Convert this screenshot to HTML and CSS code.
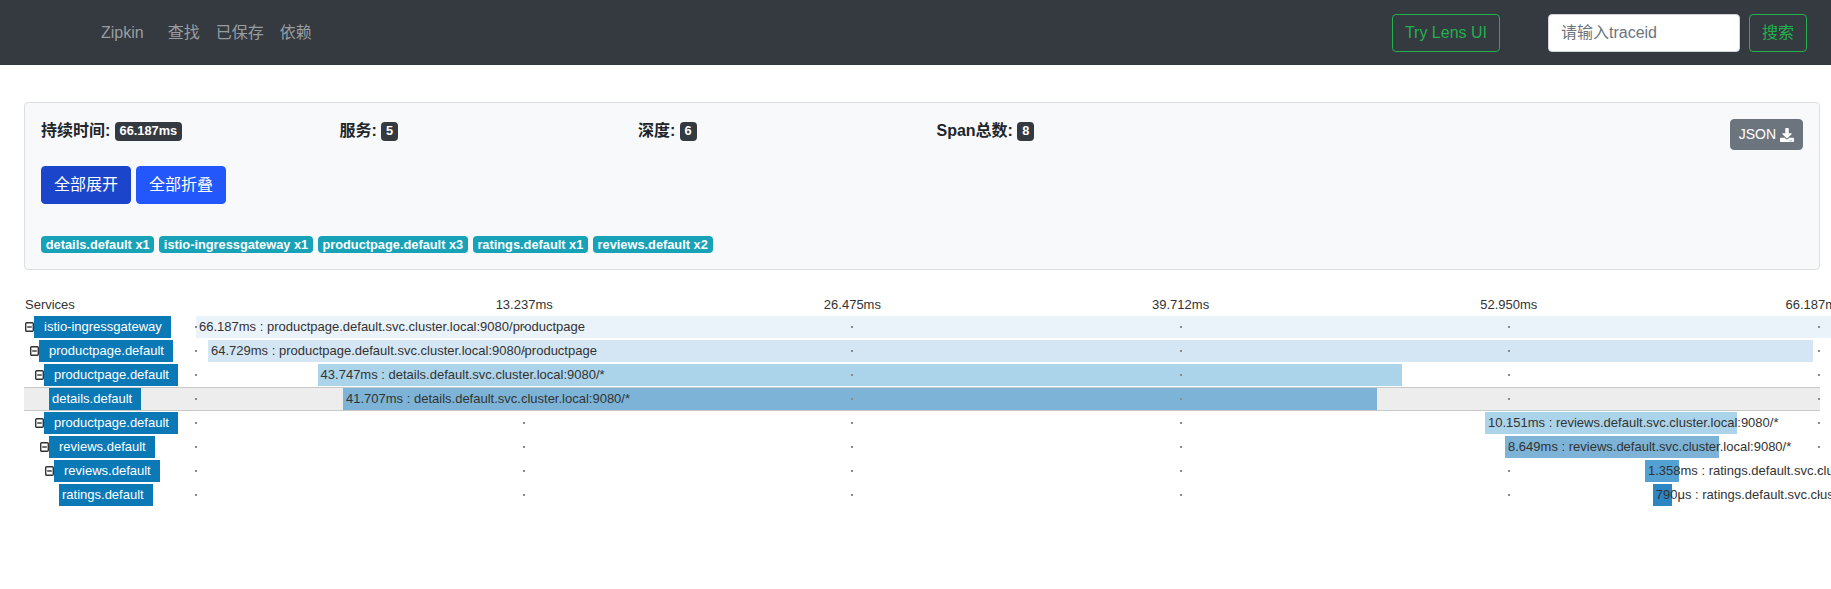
FILE: index.html
```html
<!DOCTYPE html>
<html lang="zh">
<head>
<meta charset="utf-8">
<title>Zipkin</title>
<link rel="stylesheet" href="styles.css">
</head>
<body>
<nav class="navbar">
  <a class="brand" href="#">Zipkin</a>
  <ul class="nav-links">
    <li class="nav-link">查找</li>
    <li class="nav-link">已保存</li>
    <li class="nav-link">依赖</li>
  </ul>
  <div class="nav-right">
    <button class="btn btn-outline-success lens">Try Lens UI</button>
    <form class="search">
      <input class="search-input" type="text" placeholder="请输入traceid">
      <button class="btn btn-outline-success search-btn" type="button">搜索</button>
    </form>
  </div>
</nav>

<main class="page">
  <section class="card">
    <div class="summary">
      <div class="stat">持续时间: <span class="badge badge-dark">66.187ms</span></div>
      <div class="stat">服务: <span class="badge badge-dark">5</span></div>
      <div class="stat">深度: <span class="badge badge-dark">6</span></div>
      <div class="stat">Span总数: <span class="badge badge-dark">8</span></div>
      <div class="json-col">
        <button class="btn-json">JSON
          <svg class="dl-icon" viewBox="0 0 512 512" width="14" height="14"><path fill="#fff" d="M216 0h80c13.3 0 24 10.7 24 24v168h87.7c17.8 0 26.7 21.5 14.1 34.1L269.7 378.3c-7.5 7.5-19.8 7.5-27.3 0L90.1 226.1c-12.6-12.6-3.7-34.1 14.1-34.1H192V24c0-13.3 10.7-24 24-24zm296 376v112c0 13.3-10.7 24-24 24H24c-13.3 0-24-10.7-24-24V376c0-13.3 10.7-24 24-24h146.7l49 49c20.1 20.1 52.5 20.1 72.600 0l49-49H488c13.3 0 24 10.7 24 24zm-124 88c0-11-9-20-20-20s-20 9-20 20 9 20 20 20 20-9 20-20zm64 0c0-11-9-20-20-20s-20 9-20 20 9 20 20 20 20-9 20-20z"/></svg>
        </button>
      </div>
    </div>
    <div class="actions">
      <button class="btn btn-primary active">全部展开</button>
      <button class="btn btn-primary">全部折叠</button>
    </div>
    <div class="tags">
      <span class="tag">details.default x1</span>
      <span class="tag">istio-ingressgateway x1</span>
      <span class="tag">productpage.default x3</span>
      <span class="tag">ratings.default x1</span>
      <span class="tag">reviews.default x2</span>
    </div>
  </section>

  <section class="trace">
    <div class="trace-header">
      <div class="services-title">Services</div>
      <div class="axis">
        <span class="axis-label t1">13.237ms</span>
        <span class="axis-label t2">26.475ms</span>
        <span class="axis-label t3">39.712ms</span>
        <span class="axis-label t4">52.950ms</span>
        <span class="axis-label t5">66.187ms</span>
      </div>
    </div>

    <div class="trace-row">
      <div class="svc" style="margin-left:0px">
        <span class="toggle"><svg width="9" height="10" viewBox="0 0 9 10"><rect x="0.7" y="0.7" width="7.6" height="8.6" rx="1" fill="none" stroke="#333" stroke-width="1.4"/><line x1="2.2" y1="5" x2="6.8" y2="5" stroke="#333" stroke-width="1.4"/></svg></span>
        <span class="svc-name">istio-ingressgateway</span>
      </div>
      <div class="timeline">
        <div class="bar d1" style="left:0%;width:100%"></div>
        <span class="tick-dot t0"></span><span class="tick-dot t1"></span><span class="tick-dot t2"></span><span class="tick-dot t3"></span><span class="tick-dot t4"></span><span class="tick-dot t5"></span>
        <span class="bar-text" style="left:0%">66.187ms : productpage.default.svc.cluster.local:9080/productpage</span>
      </div>
    </div>

    <div class="trace-row">
      <div class="svc" style="margin-left:5px">
        <span class="toggle"><svg width="9" height="10" viewBox="0 0 9 10"><rect x="0.7" y="0.7" width="7.6" height="8.6" rx="1" fill="none" stroke="#333" stroke-width="1.4"/><line x1="2.2" y1="5" x2="6.8" y2="5" stroke="#333" stroke-width="1.4"/></svg></span>
        <span class="svc-name">productpage.default</span>
      </div>
      <div class="timeline">
        <div class="bar d2" style="left:0.73%;width:97.78%"></div>
        <span class="tick-dot t0"></span><span class="tick-dot t1"></span><span class="tick-dot t2"></span><span class="tick-dot t3"></span><span class="tick-dot t4"></span><span class="tick-dot t5"></span>
        <span class="bar-text" style="left:0.73%">64.729ms : productpage.default.svc.cluster.local:9080/productpage</span>
      </div>
    </div>

    <div class="trace-row">
      <div class="svc" style="margin-left:10px">
        <span class="toggle"><svg width="9" height="10" viewBox="0 0 9 10"><rect x="0.7" y="0.7" width="7.6" height="8.6" rx="1" fill="none" stroke="#333" stroke-width="1.4"/><line x1="2.2" y1="5" x2="6.8" y2="5" stroke="#333" stroke-width="1.4"/></svg></span>
        <span class="svc-name">productpage.default</span>
      </div>
      <div class="timeline">
        <div class="bar d3" style="left:7.41%;width:66.09%"></div>
        <span class="tick-dot t0"></span><span class="tick-dot t1"></span><span class="tick-dot t2"></span><span class="tick-dot t3"></span><span class="tick-dot t4"></span><span class="tick-dot t5"></span>
        <span class="bar-text" style="left:7.41%">43.747ms : details.default.svc.cluster.local:9080/*</span>
      </div>
    </div>

    <div class="trace-row selected">
      <div class="svc" style="margin-left:15px">
        <span class="toggle"></span>
        <span class="svc-name leaf">details.default</span>
      </div>
      <div class="timeline">
        <div class="bar d4" style="left:8.96%;width:63.01%"></div>
        <span class="tick-dot t0"></span><span class="tick-dot t1"></span><span class="tick-dot t2"></span><span class="tick-dot t3"></span><span class="tick-dot t4"></span><span class="tick-dot t5"></span>
        <span class="bar-text" style="left:8.96%">41.707ms : details.default.svc.cluster.local:9080/*</span>
      </div>
    </div>

    <div class="trace-row">
      <div class="svc" style="margin-left:10px">
        <span class="toggle"><svg width="9" height="10" viewBox="0 0 9 10"><rect x="0.7" y="0.7" width="7.6" height="8.6" rx="1" fill="none" stroke="#333" stroke-width="1.4"/><line x1="2.2" y1="5" x2="6.8" y2="5" stroke="#333" stroke-width="1.4"/></svg></span>
        <span class="svc-name">productpage.default</span>
      </div>
      <div class="timeline">
        <div class="bar d3" style="left:78.55%;width:15.33%"></div>
        <span class="tick-dot t0"></span><span class="tick-dot t1"></span><span class="tick-dot t2"></span><span class="tick-dot t3"></span><span class="tick-dot t4"></span><span class="tick-dot t5"></span>
        <span class="bar-text" style="left:78.55%">10.151ms : reviews.default.svc.cluster.local:9080/*</span>
      </div>
    </div>

    <div class="trace-row">
      <div class="svc" style="margin-left:15px">
        <span class="toggle"><svg width="9" height="10" viewBox="0 0 9 10"><rect x="0.7" y="0.7" width="7.6" height="8.6" rx="1" fill="none" stroke="#333" stroke-width="1.4"/><line x1="2.2" y1="5" x2="6.8" y2="5" stroke="#333" stroke-width="1.4"/></svg></span>
        <span class="svc-name">reviews.default</span>
      </div>
      <div class="timeline">
        <div class="bar d4" style="left:79.77%;width:13.07%"></div>
        <span class="tick-dot t0"></span><span class="tick-dot t1"></span><span class="tick-dot t2"></span><span class="tick-dot t3"></span><span class="tick-dot t4"></span><span class="tick-dot t5"></span>
        <span class="bar-text" style="left:79.77%">8.649ms : reviews.default.svc.cluster.local:9080/*</span>
      </div>
    </div>

    <div class="trace-row">
      <div class="svc" style="margin-left:20px">
        <span class="toggle"><svg width="9" height="10" viewBox="0 0 9 10"><rect x="0.7" y="0.7" width="7.6" height="8.6" rx="1" fill="none" stroke="#333" stroke-width="1.4"/><line x1="2.2" y1="5" x2="6.8" y2="5" stroke="#333" stroke-width="1.4"/></svg></span>
        <span class="svc-name">reviews.default</span>
      </div>
      <div class="timeline">
        <div class="bar d5" style="left:88.30%;width:2.05%"></div>
        <span class="tick-dot t0"></span><span class="tick-dot t1"></span><span class="tick-dot t2"></span><span class="tick-dot t3"></span><span class="tick-dot t4"></span><span class="tick-dot t5"></span>
        <span class="bar-text" style="left:88.30%">1.358ms : ratings.default.svc.cluster.local:9080/*</span>
      </div>
    </div>

    <div class="trace-row">
      <div class="svc" style="margin-left:25px">
        <span class="toggle"></span>
        <span class="svc-name leaf">ratings.default</span>
      </div>
      <div class="timeline">
        <div class="bar d6" style="left:88.77%;width:1.19%"></div>
        <span class="tick-dot t0"></span><span class="tick-dot t1"></span><span class="tick-dot t2"></span><span class="tick-dot t3"></span><span class="tick-dot t4"></span><span class="tick-dot t5"></span>
        <span class="bar-text" style="left:88.77%">790μs : ratings.default.svc.cluster.local:9080/*</span>
      </div>
    </div>
  </section>
</main>
</body>
</html>
```

FILE: styles.css
```css
* { box-sizing: border-box; }

html, body {
  margin: 0;
  padding: 0;
  background: #fff;
  overflow: hidden;
}

body {
  font-family: "Liberation Sans", "Noto Sans CJK SC", sans-serif;
  color: #212529;
  font-size: 16px;
}

/* ---------- navbar ---------- */
.navbar {
  height: 65px;
  background: #343a40;
  display: flex;
  align-items: center;
  padding: 0 24px 0 101px;
}

.brand {
  font-size: 16px;
  line-height: 24px;
  color: #9a9da0;
  text-decoration: none;
  margin-right: 16px;
}

.nav-links {
  display: flex;
  list-style: none;
  margin: 0;
  padding: 0;
}

.nav-link {
  padding: 0 8px;
  font-size: 16px;
  line-height: 24px;
  color: #9a9da0;
}

.nav-right {
  margin-left: auto;
  display: flex;
  align-items: center;
}

.search {
  display: flex;
  align-items: center;
  margin: 0;
}

.btn {
  font-family: inherit;
  font-size: 16px;
  line-height: 24px;
  padding: 6px 12px;
  border: 1px solid transparent;
  border-radius: 4px;
  background: none;
  cursor: pointer;
}

.btn-outline-success {
  color: #22b14c;
  border-color: #22b14c;
}

.lens {
  margin-right: 48px;
}

.search-input {
  width: 192px;
  height: 38px;
  padding: 6px 12px;
  border: 1px solid #ced4da;
  border-radius: 4px;
  font-family: inherit;
  font-size: 16px;
  color: #495057;
  background: #fff;
}

.search-input::placeholder {
  color: #6c757d;
}

.search-btn {
  margin-left: 9px;
}

/* ---------- page ---------- */
.page {
  padding: 37px 11px 0 24px;
}

.card {
  background: #f8f9fa;
  border: 1px solid #dcdfe3;
  border-radius: 4px;
  padding: 16px;
}

.summary {
  display: grid;
  grid-template-columns: repeat(4, 298.5px) 1fr;
  align-items: start;
}

.stat {
  font-size: 16px;
  font-weight: 700;
  line-height: 24px;
  color: #212529;
}

.badge {
  display: inline-block;
  font-size: 12.8px;
  font-weight: 700;
  line-height: 1;
  padding: 3px 4.8px;
  border-radius: 4px;
  vertical-align: 1px;
}

.badge-dark {
  background: #343a40;
  color: #fff;
}

.json-col {
  justify-self: end;
}

.btn-json {
  display: inline-flex;
  align-items: center;
  gap: 4px;
  font-family: inherit;
  font-size: 14px;
  line-height: 21px;
  padding: 4px 8px;
  border: 1px solid #6c757d;
  border-radius: 4px;
  background: #6c757d;
  color: #fff;
}

.dl-icon {
  display: block;
}

.actions {
  margin-top: 16px;
  display: flex;
  gap: 5px;
}

.btn-primary {
  color: #fff;
  background: #2457fb;
  border-color: #2457fb;
}

.btn-primary.active {
  background: #1b46cc;
  border-color: #1b46cc;
}

.tags {
  margin-top: 32px;
  display: flex;
  gap: 4.6px;
}

.tag {
  display: inline-block;
  background: #17a2b8;
  color: #fff;
  font-size: 12.8px;
  font-weight: 700;
  line-height: 17px;
  padding: 0 4.8px;
  border-radius: 4px;
}

/* ---------- trace ---------- */
.trace {
  margin-top: 25px;
  font-size: 13px;
  color: #333;
}

.trace-header {
  display: grid;
  grid-template-columns: 172px 1641px;
  height: 20px;
  line-height: 20px;
}

.services-title {
  padding-left: 1px;
}

.axis {
  position: relative;
}

.axis-label {
  position: absolute;
  top: 0;
  transform: translateX(-50%);
  white-space: nowrap;
}

.axis-label.t1 { left: 20%; }
.axis-label.t2 { left: 40%; }
.axis-label.t3 { left: 60%; }
.axis-label.t4 { left: 80%; }
.axis-label.t5 { left: 1618px; }

.trace-row {
  display: grid;
  grid-template-columns: 172px 1641px;
  height: 24px;
  padding: 1px 0;
}

.trace-row.selected {
  background: #ededed;
  border-top: 1px solid #c9c9c9;
  border-bottom: 1px solid #c9c9c9;
  padding: 0;
}

.svc {
  display: flex;
  align-items: center;
  height: 22px;
}

.toggle {
  flex: none;
  width: 10px;
  height: 22px;
  display: flex;
  align-items: center;
  padding-left: 1px;
}

.toggle svg {
  display: block;
}

.svc-name {
  background: #0b79b5;
  color: #fff;
  font-size: 13px;
  line-height: 22px;
  height: 22px;
  padding: 0 9px 0 10px;
  white-space: nowrap;
}

.svc-name.leaf {
  padding-left: 3px;
}

.timeline {
  position: relative;
  height: 22px;
}

.bar {
  position: absolute;
  top: 0;
  bottom: 0;
}

.bar.d1 { background: #eaf2fa; }
.bar.d2 { background: #d4e6f3; }
.bar.d3 { background: #abd3ea; }
.bar.d4 { background: #7cb3d7; }
.bar.d5 { background: #53a0d3; }
.bar.d6 { background: #2c86c4; }

.tick-dot {
  position: absolute;
  top: 10px;
  width: 2px;
  height: 2px;
  margin-left: -1px;
  background: #8a8a8a;
  z-index: 1;
}

.tick-dot.t0 { left: 0; }
.tick-dot.t1 { left: 20%; }
.tick-dot.t2 { left: 40%; }
.tick-dot.t3 { left: 60%; }
.tick-dot.t4 { left: 80%; }
.tick-dot.t5 { left: 1623px; }

.bar-text {
  position: absolute;
  top: 0;
  line-height: 22px;
  font-size: 13px;
  white-space: nowrap;
  padding-left: 3px;
  color: #333;
  z-index: 2;
}
```
